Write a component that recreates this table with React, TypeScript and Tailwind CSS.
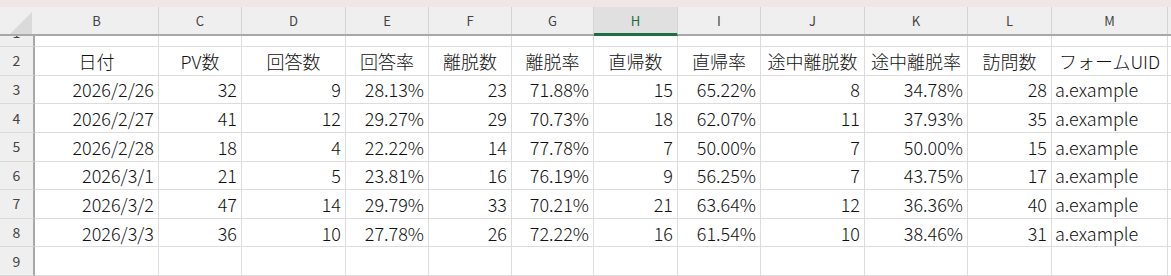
import React from "react";

const COLS = ["B", "C", "D", "E", "F", "G", "H", "I", "J", "K", "L", "M"];
const WIDTHS = [124, 83, 104, 83, 83, 82, 84, 83, 104, 103, 84, 116];

const HEADERS = ["日付", "PV数", "回答数", "回答率", "離脱数", "離脱率", "直帰数", "直帰率", "途中離脱数", "途中離脱率", "訪問数", "フォームUID"];

const DATA: string[][] = [
  ["2026/2/26", "32", "9", "28.13%", "23", "71.88%", "15", "65.22%", "8", "34.78%", "28", "a.example"],
  ["2026/2/27", "41", "12", "29.27%", "29", "70.73%", "18", "62.07%", "11", "37.93%", "35", "a.example"],
  ["2026/2/28", "18", "4", "22.22%", "14", "77.78%", "7", "50.00%", "7", "50.00%", "15", "a.example"],
  ["2026/3/1", "21", "5", "23.81%", "16", "76.19%", "9", "56.25%", "7", "43.75%", "17", "a.example"],
  ["2026/3/2", "47", "14", "29.79%", "33", "70.21%", "21", "63.64%", "12", "36.36%", "40", "a.example"],
  ["2026/3/3", "36", "10", "27.78%", "26", "72.22%", "16", "61.54%", "10", "38.46%", "31", "a.example"],
];

const font = { fontFamily: '"Noto Sans CJK JP", "Noto Sans", sans-serif' };

// one body row: row number + 12 cells
function Row({ num, cells, align }: { num: string; cells: string[]; align: "head" | "data" | "empty" }) {
  return (
    <div className="flex h-[29px]">
      <div className="w-[35px] shrink-0 bg-[#efefef] border-r-2 border-[#a8a8a8] border-b border-b-[#dadada] flex items-center justify-center text-[14px] text-[#444]">
        {num}
      </div>
      {WIDTHS.map((w, i) => {
        const text = cells[i] ?? "";
        const isText = i === 11;
        const justify =
          align === "head" ? "justify-center" : isText ? "justify-start pl-[3px]" : "justify-end pr-[4px]";
        return (
          <div
            key={i}
            style={{ width: w }}
            className={`shrink-0 bg-white border-r border-b border-[#dcdcdc] flex items-center ${justify} text-[18px] font-light leading-none text-[#111] whitespace-nowrap overflow-hidden`}
          >
            {text}
          </div>
        );
      })}
      <div className="flex-1 bg-white border-b border-[#dcdcdc]" />
    </div>
  );
}

export default function App() {
  return (
    <div className="w-[1171px] h-[276px] overflow-hidden bg-white flex flex-col" style={font}>
      {/* window strip */}
      <div className="h-[7px] shrink-0 bg-[#f1e6e6]" />

      {/* column letters */}
      <div className="flex h-[29px] shrink-0 bg-[#efefef] border-b-2 border-[#a8a8a8]">
        <div className="w-[35px] shrink-0 relative">
          <svg className="absolute left-[10px] top-[5px]" width="22" height="22" viewBox="0 0 22 22">
            <polygon points="22,0 22,22 0,22" fill="#dadada" />
          </svg>
        </div>
        {COLS.map((c, i) => (
          <div
            key={c}
            style={{ width: WIDTHS[i] }}
            className={`shrink-0 flex items-center justify-center text-[13px] border-r border-[#d4d4d4] ${
              c === "H" ? "bg-[#e0e0e0] text-[#1e6b3f] border-b-[3px] border-b-[#1e6e42] -mb-[2px] pt-[1px]" : "text-[#444]"
            }`}
          >
            {c}
          </div>
        ))}
        <div className="flex-1" />
      </div>

      {/* row 1 is scrolled so only its lower part shows */}
      <div className="h-[11px] shrink-0 overflow-hidden">
        <div className="-mt-[18px]">
          <Row num="1" cells={[]} align="empty" />
        </div>
      </div>

      <Row num="2" cells={HEADERS} align="head" />
      {DATA.map((r, i) => (
        <Row key={i} num={String(i + 3)} cells={r} align="data" />
      ))}
      <Row num="9" cells={[]} align="empty" />
    </div>
  );
}
